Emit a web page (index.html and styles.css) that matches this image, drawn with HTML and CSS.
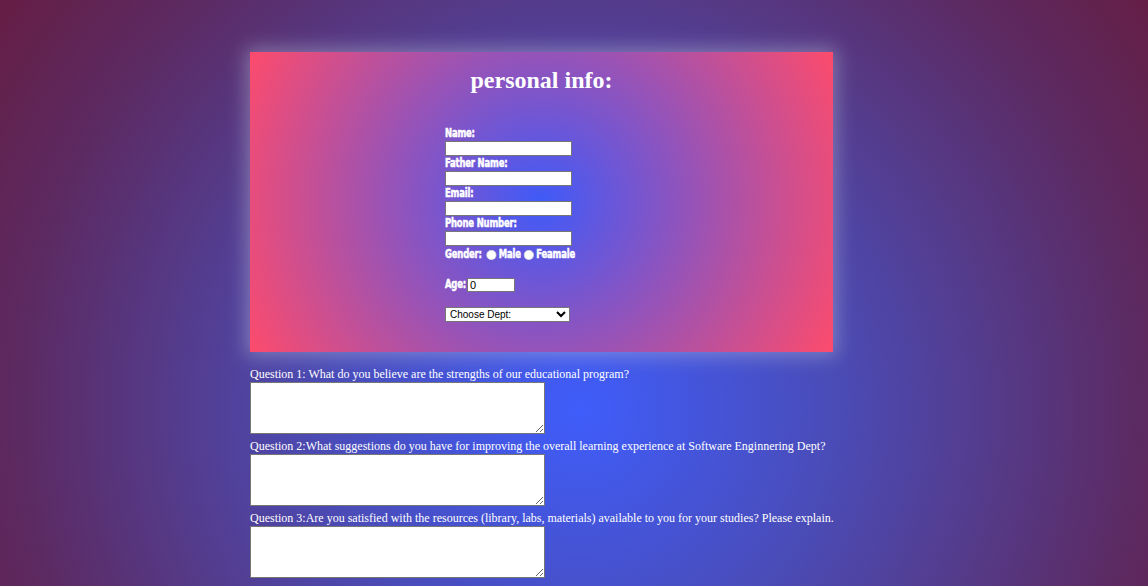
FILE: index.html
```html
<!DOCTYPE html>
<html>
<head>
<meta charset="utf-8">
<title>Feedback</title>
<link rel="stylesheet" href="styles.css">
</head>
<body>
<div class="page">
  <section class="card">
    <h2 class="title">personal info:</h2>
    <form class="info">
      <label class="lbl">Name:</label>
      <input class="txt" type="text">
      <label class="lbl">Father Name:</label>
      <input class="txt" type="text">
      <label class="lbl">Email:</label>
      <input class="txt" type="text">
      <label class="lbl">Phone Number:</label>
      <input class="txt" type="text">
      <div class="lbl gender"><span>Gender:</span><input class="radio first" type="radio" name="g"><span>Male</span><input class="radio" type="radio" name="g"><span>Feamale</span></div>
      <div class="age"><span class="lbl age-lbl">Age:</span><input class="num" type="text" value="0"></div>
      <div class="dept">
        <select class="sel"><option>Choose Dept:</option></select>
      </div>
    </form>
  </section>
  <section class="questions">
    <label class="q">Question 1: What do you believe are the strengths of our educational program?</label>
    <textarea class="ta"></textarea>
    <label class="q">Question 2:What suggestions do you have for improving the overall learning experience at Software Enginnering Dept?</label>
    <textarea class="ta"></textarea>
    <label class="q">Question 3:Are you satisfied with the resources (library, labs, materials) available to you for your studies? Please explain.</label>
    <textarea class="ta"></textarea>
  </section>
</div>
</body>
</html>
```
FILE: styles.css
```css
html {
  min-height: 100%;
  background: radial-gradient(circle at 580px 410px,
    #3f5dfb 0px, #4a4cb8 250px, #553a88 420px, #5c2a62 560px, #661d42 720px);
  background-color: #661d42;
}
body {
  margin: 0;
  font-family: "Liberation Serif", "Times New Roman", serif;
  color: #fff;
}
.page {
  padding: 52px 0 40px 250px;
}
.card {
  width: 583px;
  height: 300px;
  box-sizing: border-box;
  background: radial-gradient(circle, #3f5af8, #fd4b6c);
  box-shadow: 0 0 18px 4px rgba(190, 190, 215, 0.45);
  display: flex;
  flex-direction: column;
  align-items: stretch;
}
.title {
  margin: 15px 0 0;
  text-align: center;
  font-size: 24px;
  font-weight: bold;
  line-height: 27px;
}
.info {
  margin: 32px 0 0 195px;
  display: flex;
  flex-direction: column;
  align-items: flex-start;
}
.lbl {
  display: block;
  font-family: "DejaVu Sans Condensed", "DejaVu Sans", sans-serif;
  font-stretch: condensed;
  font-weight: bold;
  font-size: 12px;
  line-height: 15px;
  height: 15px;
  letter-spacing: -0.2px;
  white-space: nowrap;
  -webkit-text-stroke: 0.5px #fff;
  transform: scaleX(0.78);
  transform-origin: left center;
}
.txt {
  width: 127px;
  height: 15px;
  box-sizing: border-box;
  border: 1px solid #767676;
  background: #fff;
  margin: 0;
  padding: 0 2px;
  font-size: 10px;
}
.gender {
  margin-top: 1px;
  display: flex;
  align-items: center;
}
.radio {
  appearance: none;
  -webkit-appearance: none;
  width: 12.8px;
  height: 10px;
  border-radius: 50%;
  background: #fff;
  border: 1px solid #d4d4dc;
  box-sizing: border-box;
  margin: 0 3px 0 4px;
}
.radio.first {
  margin-left: 6px;
}
.age {
  margin-top: 15px;
  height: 15px;
  display: flex;
  align-items: center;
}
.age-lbl {
  width: 21px;
}
.num {
  width: 48px;
  height: 14px;
  box-sizing: border-box;
  border: 1px solid #767676;
  margin: 0 0 0 1px;
  padding: 0 2px;
  font-family: "Liberation Sans", Arial, sans-serif;
  font-size: 11px;
}
.dept {
  margin-top: 15px;
  display: flex;
}
.sel {
  width: 125px;
  height: 15px;
  box-sizing: border-box;
  padding: 0;
  margin: 0;
  font-family: "Liberation Sans", Arial, sans-serif;
  font-size: 10px;
  border: 1px solid #767676;
  border-radius: 0;
  background: #fff;
  color: #000;
}
.questions {
  margin-top: 14px;
  display: flex;
  flex-direction: column;
  align-items: flex-start;
}
.q {
  font-size: 12px;
  line-height: 16px;
  height: 16px;
  white-space: nowrap;
}
.ta {
  width: 295px;
  height: 52px;
  box-sizing: border-box;
  margin: 0 0 4px;
  border: 1px solid #767676;
  background: #fff;
}
```
